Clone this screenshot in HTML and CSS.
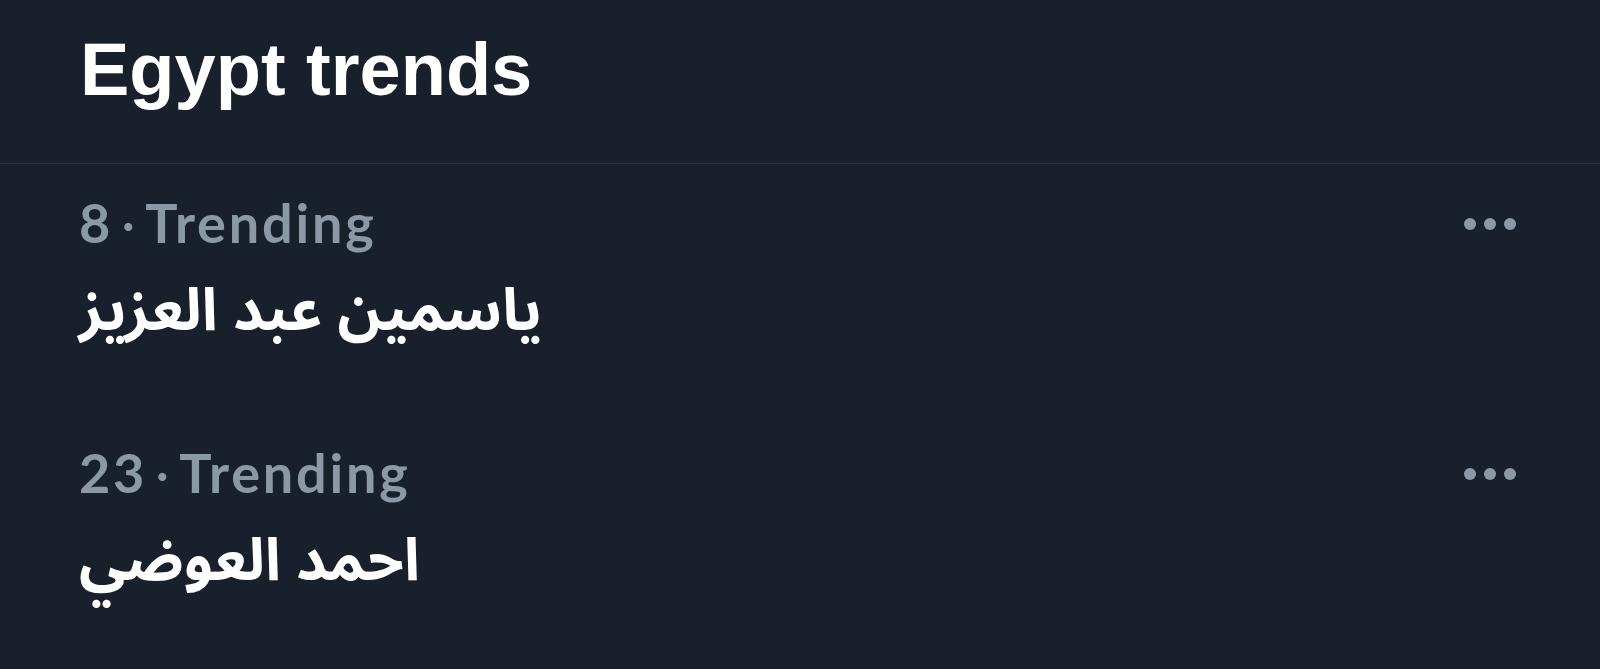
FILE: index.html
```html
<!DOCTYPE html>
<html lang="en">
<head>
<meta charset="utf-8">
<link rel="stylesheet" href="styles.css">
</head>
<body>
<div class="panel">
  <header class="header"><h1 class="title">Egypt trends</h1></header>
  <div class="trend">
    <div class="trend-text">
      <div class="meta"><span class="rank">8</span><span class="sep">·</span><span>Trending</span></div>
      <div class="name" dir="rtl">ياسمين عبد العزيز</div>
    </div>
    <div class="more"><span></span><span></span><span></span></div>
  </div>
  <div class="trend">
    <div class="trend-text">
      <div class="meta"><span class="rank">23</span><span class="sep">·</span><span>Trending</span></div>
      <div class="name" dir="rtl">احمد العوضي</div>
    </div>
    <div class="more"><span></span><span></span><span></span></div>
  </div>
</div>
</body>
</html>
```
FILE: styles.css
```css
html, body { margin: 0; padding: 0; background: #17202b; }
body { width: 1600px; height: 669px; overflow: hidden; font-family: Lato, "Liberation Sans", sans-serif; }
.panel { display: flex; flex-direction: column; }
.header { height: 163px; border-bottom: 1px solid #2c3640; padding-left: 80px; }
.title { margin: 0; padding-top: 30px; font-family: "Liberation Sans", sans-serif; font-weight: 700; font-size: 74px; line-height: 80px; color: #ffffff; letter-spacing: 0; }
.trend { display: flex; justify-content: space-between; align-items: flex-start; padding: 0 84px 0 79px; height: 250px; }
.trend-text { display: flex; flex-direction: column; align-items: flex-start; }
.meta { display: flex; align-items: baseline; color: #8b98a5; font-weight: 700; font-size: 54px; line-height: 60px; margin-top: 29px; letter-spacing: 2.8px; }
.sep { font-weight: 400; padding: 0 10px 0 8px; letter-spacing: 0; }
.name { color: #ffffff; font-family: "Noto Sans Arabic", "DejaVu Sans", sans-serif; font-weight: 700; font-size: 59px; line-height: 70px; margin-top: 24px; text-align: left; }
.more { display: flex; gap: 8px; margin-top: 54px; }
.more span { width: 12px; height: 12px; border-radius: 50%; background: #8b98a5; }
```
